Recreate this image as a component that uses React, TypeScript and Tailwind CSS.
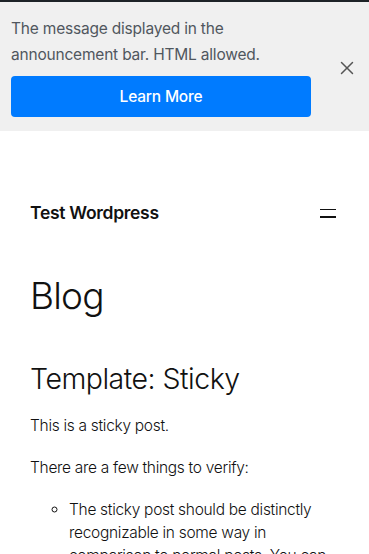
import { X } from 'lucide-react';

const App = () => {
  return (
    <div className="min-h-[554px] bg-white font-['Inter',sans-serif] text-[#111]">
      <div className="h-[2px] bg-[#1d2327]" />

      <div className="bg-[#f0f0f0] pl-[11px] pr-[11px] pt-[14px] pb-[14px] flex items-center">
        <div className="w-[300px]">
          <p className="text-[15.5px] leading-[26px] text-[#50575e] tracking-[-0.2px]">
            The message displayed in the announcement bar. HTML allowed.
          </p>
          <button className="mt-[8px] w-full h-[41px] rounded-[4px] bg-[#007bff] text-white text-[15.5px] font-medium tracking-[-0.2px]">
            Learn More
          </button>
        </div>
        <div className="flex-1 flex justify-end mt-[2px]">
          <X size={22} strokeWidth={1.6} className="text-[#555]" />
        </div>
      </div>

      <div className="px-[30px]">
        <header className="flex items-center justify-between pt-[69px]">
          <span className="text-[17.5px] font-semibold tracking-[-0.3px] text-[#111]">
            Test Wordpress
          </span>
          <button className="flex flex-col gap-[6px] w-[16px] mr-[3px]">
            <span className="block h-[1.5px] bg-[#111]" />
            <span className="block h-[1.5px] bg-[#111]" />
          </button>
        </header>

        <h1 className="mt-[48px] text-[37px] font-light leading-[44px] tracking-[-0.8px] text-[#111]">
          Blog
        </h1>

        <h2 className="mt-[43px] text-[28.5px] font-light leading-[36px] tracking-[-0.5px] text-[#111]">
          Template: Sticky
        </h2>

        <p className="mt-[17px] text-[15.5px] font-light leading-[24px] tracking-[-0.3px] text-[#111]">
          This is a sticky post.
        </p>
        <p className="mt-[18px] text-[15.5px] font-light leading-[24px] tracking-[-0.3px] text-[#111]">
          There are a few things to verify:
        </p>
        <ul className="mt-[18px] pl-[39px] list-[circle] text-[15.5px] font-light leading-[23px] tracking-[-0.3px] text-[#111]">
          <li>
            The sticky post should be distinctly recognizable in some way in comparison to normal posts. You can style the .sticky class if you are using the post_class() function to generate your post classes, which is a best practice.
          </li>
        </ul>
      </div>
    </div>
  );
};

export default App;
